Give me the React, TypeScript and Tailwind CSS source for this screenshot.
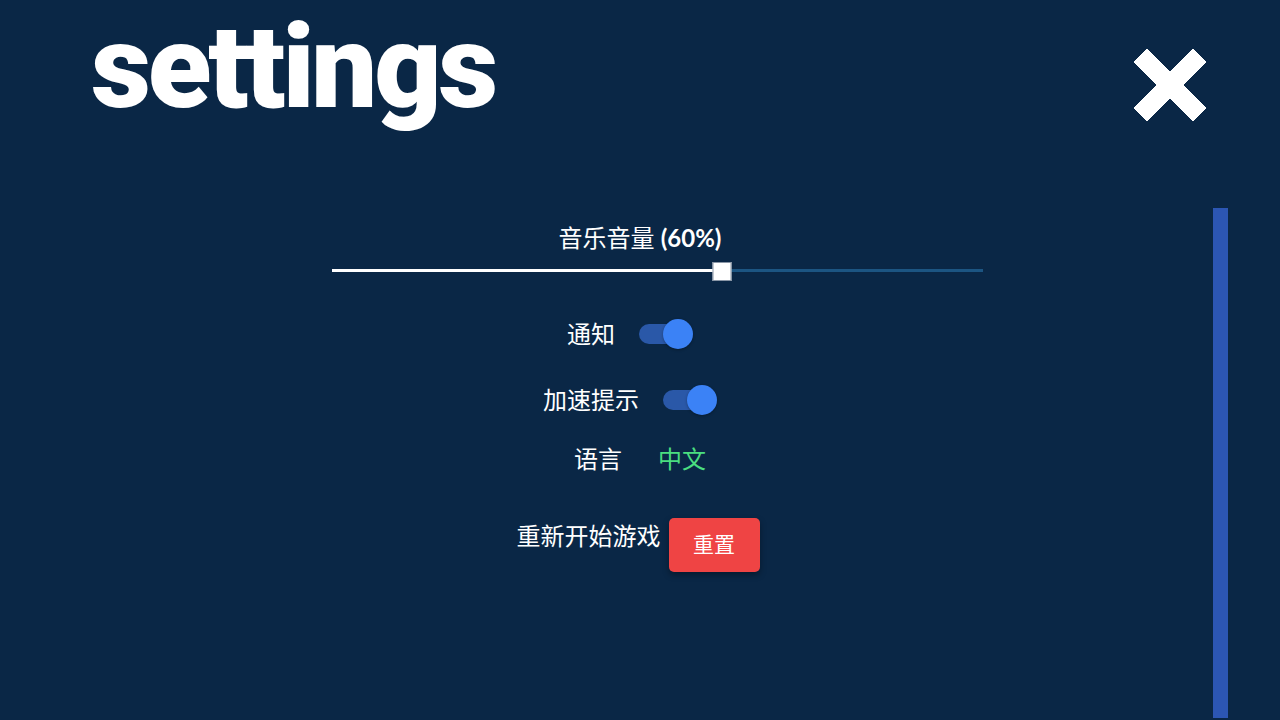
import React from "react";

const cjk = "font-['Noto_Sans','Noto_Sans_CJK_SC',sans-serif]";

function Toggle() {
  return (
    <div className="relative h-[30px] w-[54px]">
      <div className="absolute left-0 top-[5px] h-[20px] w-[46px] rounded-full bg-[#2a58a8]" />
      <div className="absolute right-0 top-0 h-[30px] w-[30px] rounded-full bg-[#3b82f6] shadow-[0_1px_3px_rgba(0,0,0,0.3)]" />
    </div>
  );
}

function CloseIcon() {
  return (
    <svg width="72" height="72" viewBox="0 0 74 74" shapeRendering="crispEdges">
      <g fill="#ffffff">
        <rect x="-6" y="27" width="86" height="20" rx="1.5" transform="rotate(45 37 37)" />
        <rect x="-6" y="27" width="86" height="20" rx="1.5" transform="rotate(-45 37 37)" />
      </g>
    </svg>
  );
}

export default function App() {
  const volume = 60;

  return (
    <div className={`relative h-[720px] w-[1280px] overflow-hidden bg-[#0a2746] text-white ${cjk}`}>
      <header className="flex h-[160px] items-start justify-between pl-[91px] pr-[74px]">
        <h1 className="pb-[8px] font-['Roboto',sans-serif] text-[117px] font-black leading-[1.15] tracking-[-3.2px]">
          settings
        </h1>
        <div className="mt-[49px]">
          <CloseIcon />
        </div>
      </header>

      <main className="flex flex-col items-center pt-[61px]">
        <p className="text-[24px] leading-[34px]">
          音乐音量 <span className="font-['Lato',sans-serif] font-bold">({volume}%)</span>
        </p>

        <div className="relative ml-[34px] mt-[6px] h-[20px] w-[651px]">
          <div className="absolute left-0 right-0 top-[8px] h-[3px] bg-[#1c5582]" />
          <div className="absolute left-0 top-[8px] h-[3px] bg-white" style={{ width: `${volume}%` }} />
          <div
            className="absolute top-[1px] h-[19px] w-[19px] -translate-x-1/2 border border-[#8a96a6] bg-white"
            style={{ left: `${volume}%` }}
          />
        </div>

        <div className="mr-[20px] mt-[36px] flex h-[33px] items-center gap-[24px]">
          <span className="text-[24px] leading-[33px]">通知</span>
          <Toggle />
        </div>

        <div className="mr-[20px] mt-[33px] flex h-[33px] items-center gap-[24px]">
          <span className="text-[24px] leading-[33px]">加速提示</span>
          <Toggle />
        </div>

        <div className="mt-[26px] flex h-[33px] items-center gap-[36px]">
          <span className="text-[24px] leading-[33px]">语言</span>
          <span className="text-[24px] leading-[33px] text-[#4ade80]">中文</span>
        </div>

        <div className="mr-[4px] mt-[43px] flex items-start gap-[8px]">
          <span className="mt-[1px] text-[24px] leading-[33px]">重新开始游戏</span>
          <button className="h-[54px] w-[91px] rounded-[5px] bg-[#ef4444] text-[21px] text-white shadow-[0_3px_6px_rgba(0,0,0,0.35)]">
            重置
          </button>
        </div>
      </main>

      <div className="absolute right-[52px] top-[208px] h-[510px] w-[15px] bg-[#2c56b3]" />
    </div>
  );
}
